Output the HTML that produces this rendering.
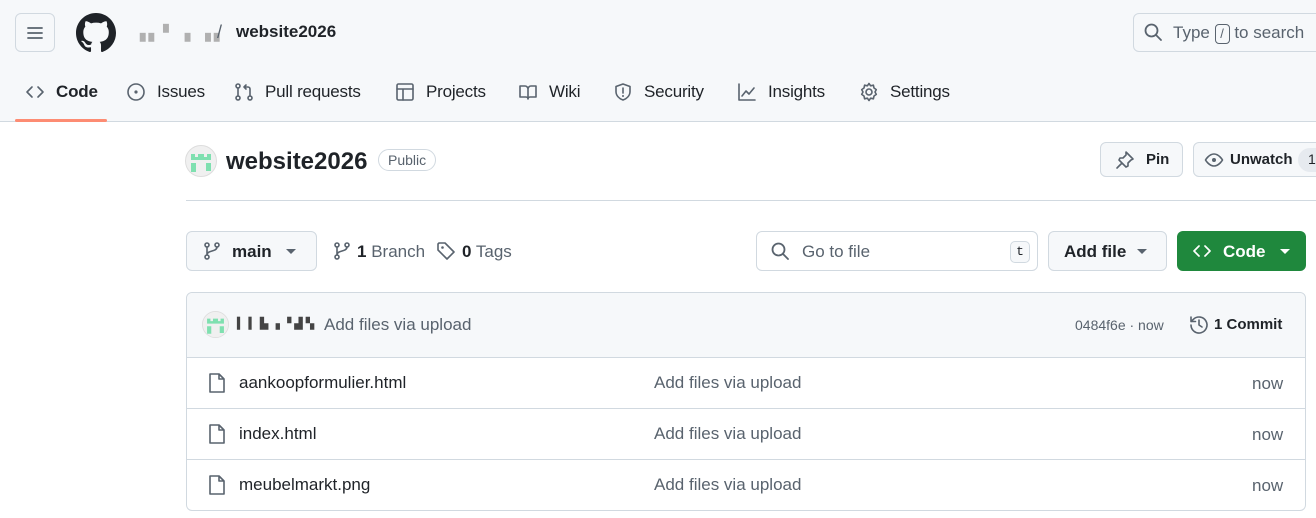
<!DOCTYPE html>
<html><head><meta charset="utf-8"><style>
*{box-sizing:border-box;margin:0;padding:0}
body{width:1316px;height:518px;overflow:hidden;background:#fff;font-family:"Liberation Sans",sans-serif;color:#1f2328;position:relative}
.a{position:absolute;white-space:nowrap}
svg{display:block}
.hdr{position:absolute;left:0;top:0;width:1316px;height:122px;background:#f6f8fa;border-bottom:1px solid #d1d9e0}
.btn{position:absolute;border:1px solid #d1d9e0;border-radius:6px;background:#f6f8fa}
.tab{position:absolute;top:82px;font-size:17px;color:#1f2328;display:flex;align-items:center;gap:11px;letter-spacing:-0.2px}
.ic{fill:none;stroke:#59636e;stroke-width:1.6;stroke-linecap:round;stroke-linejoin:round}
.row{position:absolute;left:187px;width:1118px;height:51px;border-top:1px solid #d1d9e0;font-size:17px}
</style></head><body>
<div class="hdr"></div>
<div class="btn" style="left:15px;top:13px;width:40px;height:39px"></div>
<svg class="a" style="left:25px;top:23px" width="20" height="20"><path d="M3 5h14M3 10h14M3 15h14" stroke="#59636e" stroke-width="1.8" stroke-linecap="round"/></svg>
<svg class="a" style="left:76px;top:13px" width="40" height="40" viewBox="0 0 16 16"><path fill="#1f2328" d="M8 0C3.58 0 0 3.580 0 8c0 3.54 2.29 6.53 5.47 7.59.4.07.55-.17.55-.38 0-.19-.01-.82-.01-1.490-2.01.37-2.53-.49-2.69-.94-.09-.23-.48-.94-.82-1.13-.28-.15-.68-.52-.01-.53.63-.01 1.08.58 1.23.82.72 1.21 1.870.87 2.330.66.07-.52.28-.87.51-1.07-1.78-.2-3.64-.89-3.64-3.95 0-.87.31-1.59.82-2.15-.08-.2-.36-1.02.08-2.12 0 0 .67-.21 2.2.82.64-.18 1.32-.27 2-.27.68 0 1.36.09 2 .27 1.53-1.04 2.2-.82 2.2-.82.44 1.1.16 1.92.08 2.12.51.56.82 1.27.82 2.15 0 3.07-1.87 3.75-3.65 3.95.29.25.54.73.54 1.48 0 1.07-.01 1.93-.01 2.2 0 .21.15.46.55.38A8.013 8.013 0 0016 8c0-4.420-3.58-8-8-8z"/></svg>
<div class="a" style="left:134px;top:24px;font-size:15px;color:#b0b0b0;letter-spacing:3px">▗▖▘ ▖▗▖</div>
<div class="a" style="left:217px;top:22px;font-size:18px;color:#59636e">/</div>
<div class="a" style="left:236px;top:22px;font-size:17px;font-weight:bold;color:#1f2328">website2026</div>
<div class="btn" style="left:1133px;top:13px;width:200px;height:39px;background:#f6f8fa"></div>
<svg class="a" style="left:1143px;top:22px" width="20" height="20"><circle cx="8.5" cy="8.5" r="6" fill="none" stroke="#59636e" stroke-width="1.8"/><path d="M13 13l5 5" stroke="#59636e" stroke-width="1.8" stroke-linecap="round"/></svg>
<div class="a" style="left:1173px;top:23px;font-size:17px;color:#59636e">Type <span style="display:inline-block;border:1px solid #59636e;border-radius:4px;width:15px;height:20px;font-size:13px;text-align:center;line-height:18px;vertical-align:middle">/</span> to search</div>

<div class="tab" style="left:25px"><svg width="20" height="20"><path d="M7 5l-5 5 5 5M13 5l5 5-5 5" class="ic"/></svg><b>Code</b></div>
<div class="a" style="left:15px;top:119px;width:92px;height:3px;background:#fd8c73;border-radius:2px"></div>
<div class="tab" style="left:126px"><svg width="20" height="20"><circle cx="10" cy="10" r="8" class="ic"/><circle cx="10" cy="10" r="1.6" fill="#59636e"/></svg>Issues</div>
<div class="tab" style="left:234px"><svg width="20" height="20"><circle cx="4" cy="4" r="2" class="ic"/><circle cx="4" cy="16" r="2" class="ic"/><circle cx="16" cy="16" r="2" class="ic"/><path d="M4 6v8M16 14V7a2 2 0 00-2-2h-4M12 3l-2 2 2 2" class="ic"/></svg>Pull requests</div>
<div class="tab" style="left:395px"><svg width="20" height="20"><rect x="2" y="2" width="16" height="16" rx="1.5" class="ic"/><path d="M2 7h16M8 7v11" class="ic"/></svg>Projects</div>
<div class="tab" style="left:518px"><svg width="20" height="20"><path d="M2 4h5a3 3 0 013 3v10a2 2 0 00-2-2H2zM18 4h-5a3 3 0 00-3 3v10a2 2 0 012-2h6z" class="ic"/></svg>Wiki</div>
<div class="tab" style="left:613px"><svg width="20" height="20"><path d="M10 2l7 2.5v5c0 4-3 7-7 8.5-4-1.5-7-4.5-7-8.5v-5z" class="ic"/><path d="M10 6v5" class="ic"/><circle cx="10" cy="14" r="1" fill="#59636e"/></svg>Security</div>
<div class="tab" style="left:737px"><svg width="20" height="20"><path d="M2 2v16h16M5 14l4-5 3 3 5-6" class="ic"/></svg>Insights</div>
<div class="tab" style="left:859px"><svg width="20" height="20"><circle cx="10" cy="10" r="3" class="ic"/><path d="M10 1.5l1.6 2.3 2.8-.6.6 2.8 2.3 1.6-1.3 2.4 1.3 2.4-2.3 1.6-.6 2.8-2.8-.6-1.6 2.3-1.6-2.3-2.8.6-.6-2.8-2.3-1.6 1.3-2.4-1.3-2.4 2.3-1.6.6-2.8 2.8.6z" class="ic"/></svg>Settings</div>

<svg class="a" style="left:185px;top:145px" width="32" height="32" viewBox="0 0 32 32"><circle cx="16" cy="16" r="15.5" fill="#f0f0f0" stroke="#ddd"/><path d="M6 9h4v3h3V9h6v3h3V9h4v6H6zM6 18h5v9H6zM21 18h5v8h-5z" fill="#7fe0b0"/></svg>
<div class="a" style="left:226px;top:148px;font-size:24px;font-weight:bold">website2026</div>
<div class="a" style="left:378px;top:149px;border:1px solid #d1d9e0;border-radius:12px;padding:2px 9px;font-size:14px;color:#59636e">Public</div>
<div class="btn" style="left:1100px;top:142px;width:83px;height:35px"></div>
<svg class="a" style="left:1115px;top:150px" width="20" height="20"><path d="M11 2l7 7-2 1-3 3 0 3-2 1-7-7 1-2 3 0 3-3z M6 14l-4 4" class="ic"/></svg>
<div class="a" style="left:1146px;top:151px;font-size:15px;font-weight:bold">Pin</div>
<div class="btn" style="left:1193px;top:142px;width:140px;height:35px"></div>
<svg class="a" style="left:1204px;top:150px" width="20" height="20"><path d="M1.5 10S5 4 10 4s8.5 6 8.5 6-3.5 6-8.5 6-8.5-6-8.5-6z" class="ic"/><circle cx="10" cy="10" r="2" fill="#59636e"/></svg>
<div class="a" style="left:1230px;top:151px;font-size:15px;font-weight:bold">Unwatch</div>
<div class="a" style="left:1298px;top:148px;width:30px;height:24px;border-radius:12px;background:#e6eaef;font-size:14px;padding:3px 0 0 10px">1</div>
<div class="a" style="left:186px;top:200px;width:1130px;height:1px;background:#d1d9e0"></div>

<div class="btn" style="left:186px;top:231px;width:131px;height:40px"></div>
<svg class="a" style="left:202px;top:241px" width="20" height="20"><circle cx="5" cy="4" r="2" class="ic"/><circle cx="5" cy="16" r="2" class="ic"/><circle cx="15" cy="4" r="2" class="ic"/><path d="M5 6v8M15 6c0 5-10 3-10 8" class="ic"/></svg>
<div class="a" style="left:232px;top:242px;font-size:17px;font-weight:bold">main</div>
<div class="a" style="left:286px;top:249px;border:5px solid transparent;border-top:5px solid #59636e"></div>
<svg class="a" style="left:332px;top:241px" width="20" height="20"><circle cx="5" cy="4" r="2" class="ic"/><circle cx="5" cy="16" r="2" class="ic"/><circle cx="15" cy="4" r="2" class="ic"/><path d="M5 6v8M15 6c0 5-10 3-10 8" class="ic"/></svg>
<div class="a" style="left:357px;top:242px;font-size:17px;color:#59636e"><b style="color:#1f2328">1</b> Branch</div>
<svg class="a" style="left:436px;top:241px" width="20" height="20"><path d="M2 3v6l9 9 7-7-9-9H3z" class="ic"/><circle cx="6.5" cy="6.5" r="1.3" fill="#59636e"/></svg>
<div class="a" style="left:462px;top:242px;font-size:17px;color:#59636e"><b style="color:#1f2328">0</b> Tags</div>

<div class="a" style="left:756px;top:231px;width:282px;height:40px;border:1px solid #d1d9e0;border-radius:6px"></div>
<svg class="a" style="left:770px;top:241px" width="20" height="20"><circle cx="8.5" cy="8.5" r="6" fill="none" stroke="#59636e" stroke-width="1.8"/><path d="M13 13l5 5" stroke="#59636e" stroke-width="1.8" stroke-linecap="round"/></svg>
<div class="a" style="left:802px;top:242px;font-size:17px;color:#59636e">Go to file</div>
<div class="a" style="left:1010px;top:241px;width:20px;height:22px;border:1px solid #d1d9e0;border-radius:5px;background:#f6f8fa;font-family:'Liberation Mono',monospace;font-size:13px;text-align:center;line-height:20px">t</div>
<div class="btn" style="left:1048px;top:231px;width:119px;height:40px"></div>
<div class="a" style="left:1064px;top:242px;font-size:17px;font-weight:bold">Add file</div>
<div class="a" style="left:1137px;top:249px;border:5px solid transparent;border-top:5px solid #59636e"></div>
<div class="a" style="left:1177px;top:231px;width:129px;height:40px;border-radius:6px;background:#1f883d"></div>
<svg class="a" style="left:1192px;top:241px" width="20" height="20"><path d="M7 5l-5 5 5 5M13 5l5 5-5 5" fill="none" stroke="#fff" stroke-width="1.7" stroke-linecap="round" stroke-linejoin="round"/></svg>
<div class="a" style="left:1223px;top:242px;font-size:17px;font-weight:bold;color:#fff">Code</div>
<div class="a" style="left:1280px;top:249px;border:5px solid transparent;border-top:5px solid #fff"></div>

<div class="a" style="left:186px;top:292px;width:1120px;height:219px;border:1px solid #d1d9e0;border-radius:6px"></div>
<div class="a" style="left:187px;top:293px;width:1118px;height:64px;background:#f6f8fa;border-radius:6px 6px 0 0"></div>
<svg class="a" style="left:202px;top:311px" width="27" height="27" viewBox="0 0 32 32"><circle cx="16" cy="16" r="15.5" fill="#f0f0f0" stroke="#ddd"/><path d="M6 9h4v3h3V9h6v3h3V9h4v6H6zM6 18h5v9H6zM21 18h5v8h-5z" fill="#7fe0b0"/></svg>
<div class="a" style="left:237px;top:317px;font-size:11px;color:#444;letter-spacing:3px">▍▍▙▗▝▟▚</div>
<div class="a" style="left:324px;top:315px;font-size:17px;color:#59636e">Add files via upload</div>
<div class="a" style="left:1075px;top:317px;font-size:14px;color:#59636e">0484f6e · now</div>
<svg class="a" style="left:1188px;top:314px" width="22" height="22"><path d="M3 11a8 8 0 102.4-5.7L3 7.5M3 3v4.5h4.5M11 6v5l3 2" class="ic" stroke-width="1.8"/></svg>
<div class="a" style="left:1214px;top:316px;font-size:15px;font-weight:bold">1 Commit</div>

<div class="row" style="top:357px"></div><div class="row" style="top:408px"></div><div class="row" style="top:459px"></div>
<svg class="a" style="left:207px;top:372px" width="20" height="22"><path d="M3 2h9l5 5v13H3zM12 2v5h5" class="ic"/></svg>
<div class="a" style="left:239px;top:373px;font-size:17px">aankoopformulier.html</div>
<div class="a" style="left:654px;top:373px;font-size:17px;color:#59636e">Add files via upload</div>
<div class="a" style="left:1252px;top:374px;font-size:17px;color:#59636e">now</div>
<svg class="a" style="left:207px;top:423px" width="20" height="22"><path d="M3 2h9l5 5v13H3zM12 2v5h5" class="ic"/></svg>
<div class="a" style="left:239px;top:424px;font-size:17px">index.html</div>
<div class="a" style="left:654px;top:424px;font-size:17px;color:#59636e">Add files via upload</div>
<div class="a" style="left:1252px;top:425px;font-size:17px;color:#59636e">now</div>
<svg class="a" style="left:207px;top:474px" width="20" height="22"><path d="M3 2h9l5 5v13H3zM12 2v5h5" class="ic"/></svg>
<div class="a" style="left:239px;top:475px;font-size:17px">meubelmarkt.png</div>
<div class="a" style="left:654px;top:475px;font-size:17px;color:#59636e">Add files via upload</div>
<div class="a" style="left:1252px;top:476px;font-size:17px;color:#59636e">now</div>
</body></html>
